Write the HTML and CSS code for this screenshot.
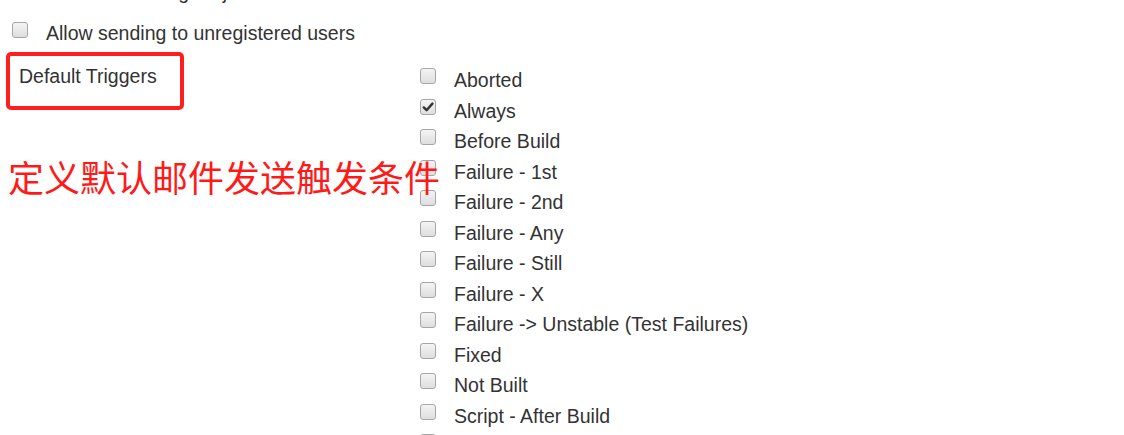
FILE: index.html
```html
<!DOCTYPE html>
<html lang="en">
<head>
    <meta charset="UTF-8">
    <title>Extended E-mail Notification</title>
    <link rel="stylesheet" href="styles.css">
</head>
<body>
    <div class="config">
        <div class="top-options">
            <div class="option-row">
                <span class="box"></span>
                <span class="option-label">Enable watching for jobs</span>
            </div>
            <div class="option-row">
                <span class="box"></span>
                <span class="option-label">Allow sending to unregistered users</span>
            </div>
        </div>

        <div class="setting">
            <div class="setting-name">Default Triggers</div>
            <div class="trigger-list">
                <div class="trigger"><span class="box"></span><span class="option-label">Aborted</span></div>
                <div class="trigger">
                    <span class="box checked">
                        <svg width="12" height="12" viewBox="0 0 12 12"><path d="M1.8 6.4 L4.6 9.2 L10.4 2.6" fill="none" stroke="#333" stroke-width="2.4" stroke-linecap="round" stroke-linejoin="round"/></svg>
                    </span>
                    <span class="option-label">Always</span>
                </div>
                <div class="trigger"><span class="box"></span><span class="option-label">Before Build</span></div>
                <div class="trigger"><span class="box"></span><span class="option-label">Failure - 1st</span></div>
                <div class="trigger"><span class="box"></span><span class="option-label">Failure - 2nd</span></div>
                <div class="trigger"><span class="box"></span><span class="option-label">Failure - Any</span></div>
                <div class="trigger"><span class="box"></span><span class="option-label">Failure - Still</span></div>
                <div class="trigger"><span class="box"></span><span class="option-label">Failure - X</span></div>
                <div class="trigger"><span class="box"></span><span class="option-label">Failure -&gt; Unstable (Test Failures)</span></div>
                <div class="trigger"><span class="box"></span><span class="option-label">Fixed</span></div>
                <div class="trigger"><span class="box"></span><span class="option-label">Not Built</span></div>
                <div class="trigger"><span class="box"></span><span class="option-label">Script - After Build</span></div>
                <div class="trigger"><span class="box"></span><span class="option-label">Script - Before Build</span></div>
                <div class="trigger"><span class="box"></span><span class="option-label">Status Changed</span></div>
            </div>
        </div>

        <!-- annotations drawn over the screenshot -->
        <div class="mark-box"></div>
        <div class="mark-note">定义默认邮件发送触发条件</div>
    </div>
</body>
</html>
```

FILE: styles.css
```css
* {
    margin: 0;
    padding: 0;
    box-sizing: border-box;
}

html, body {
    height: 100%;
    overflow: hidden;
}

body {
    background: white;
    font-family: 'Liberation Sans', Arial, sans-serif;
    font-size: 19.5px;
    color: #333;
}

.config {
    position: relative;
    display: flow-root;
}

.top-options {
    margin-top: -23.5px;
    padding-left: 12px;
}

.option-row {
    display: flex;
    align-items: flex-start;
    height: 41px;
    line-height: 30.5px;
}

.box {
    flex: none;
    width: 16px;
    height: 16px;
    margin-top: 4.5px;
    margin-right: 18px;
    border: 1px solid #a6a6a6;
    border-radius: 3px;
    background: linear-gradient(#f4f4f4, #dedede);
    display: flex;
    align-items: center;
    justify-content: center;
}

.box svg {
    display: block;
}

.option-label {
    white-space: nowrap;
}

.setting {
    display: flex;
    margin-top: 6.5px;
    padding-left: 19px;
}

.setting-name {
    width: 401px;
    flex: none;
    line-height: 22px;
}

.trigger-list {
    display: flex;
    flex-direction: column;
}

.trigger {
    display: flex;
    align-items: flex-start;
    height: 30.5px;
    line-height: 30.5px;
}

.trigger .box {
    margin-top: 3px;
}

.mark-box {
    position: absolute;
    left: 6px;
    top: 52px;
    width: 178px;
    height: 58px;
    border: 4px solid #ff1e1e;
    border-radius: 5px;
}

.mark-note {
    position: absolute;
    left: 8px;
    top: 158px;
    font-family: 'Noto Sans CJK SC', sans-serif;
    font-size: 36px;
    line-height: 1;
    color: #ff1a1a;
    white-space: nowrap;
}
```
